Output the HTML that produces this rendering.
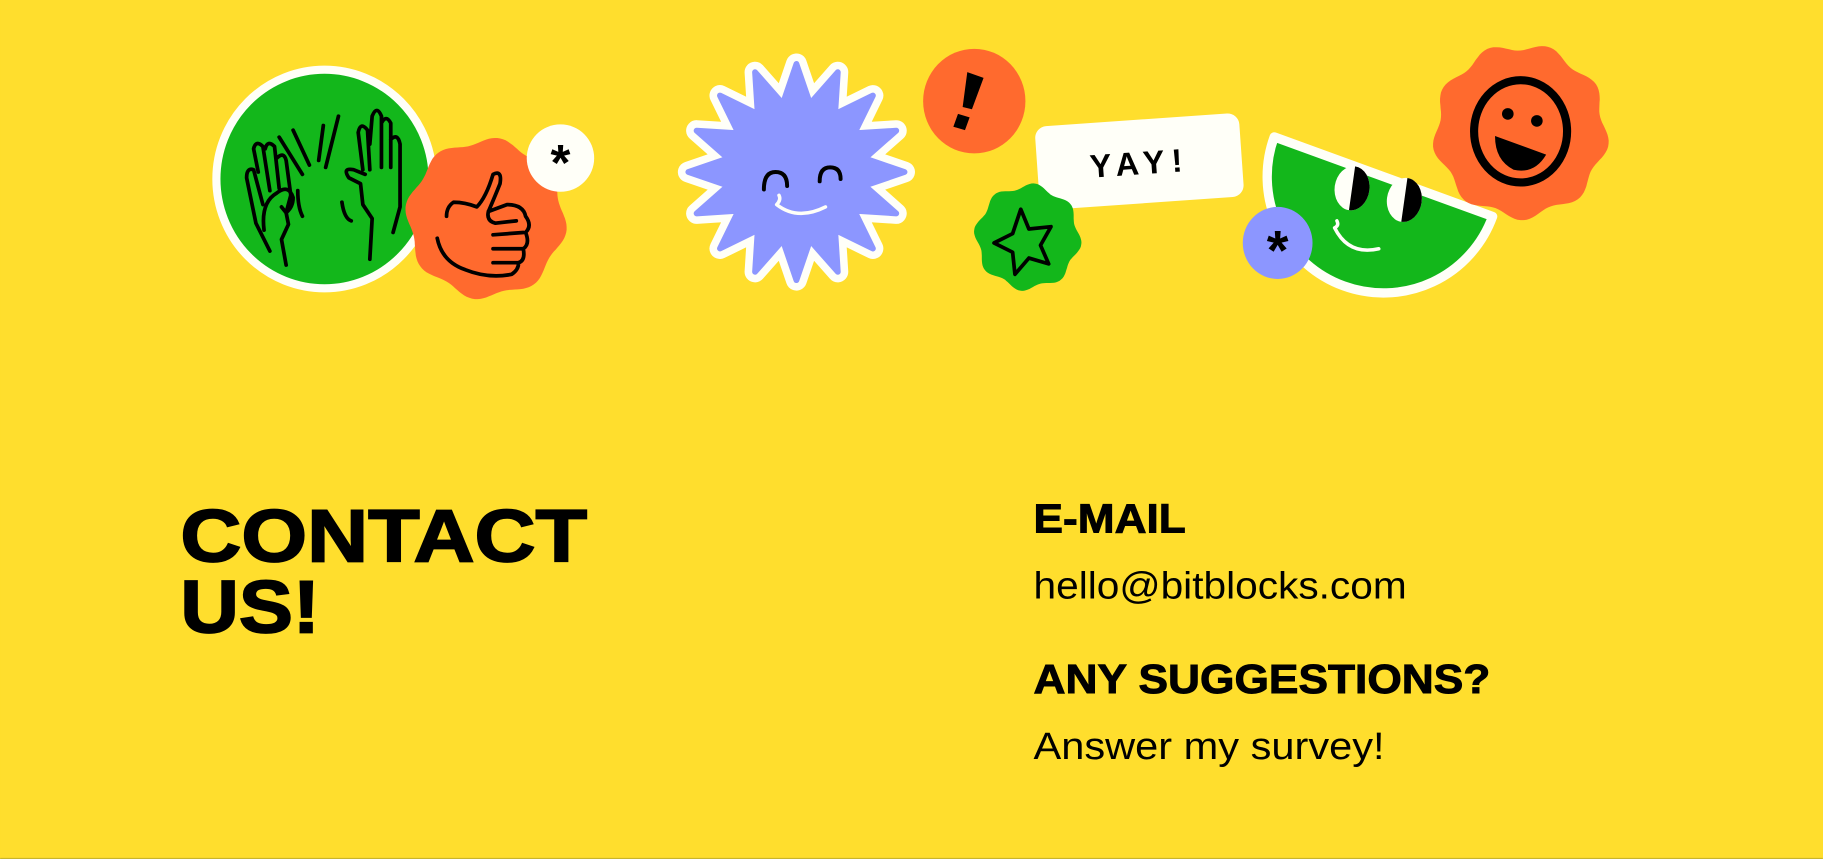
<!DOCTYPE html>
<html><head><meta charset="utf-8"><style>
html,body{margin:0;padding:0;background:#FFDE2D;width:1823px;height:859px;overflow:hidden}
svg{display:block}
.h{font-family:"Liberation Sans",sans-serif;font-weight:bold}
.t{font-family:"Liberation Sans",sans-serif;font-weight:normal}
</style></head><body>
<svg width="1823" height="859" viewBox="0 0 1568 739" xmlns="http://www.w3.org/2000/svg">
<rect width="1568" height="739" fill="#FFDE2D"/>
<line x1="0" y1="738.5" x2="1568" y2="738.5" stroke="#c9b52a" stroke-width="1"/>

<ellipse cx="279" cy="154" rx="93" ry="94" fill="#13B71B" stroke="#FFFFF8" stroke-width="7"/>
<g fill="none" stroke="#000" stroke-width="3.2" stroke-linecap="round" stroke-linejoin="round" transform="translate(-6,-22)">
<path d="M246 140 L266 172 M258 134 L272 164 M284 130 L280 160 M297 122 L286 166"/>
<path d="M238 238 L226 214 L218 175 Q218 166 224 168 L232 198 M228 170 L224 150 Q226 142 232 148 L238 186 M234 150 Q236 142 242 148 L246 184 M244 158 Q250 152 252 160 L256 190 L252 205 L248 200"/>
<path d="M233 220 Q230 196 244 188 Q254 180 258 192 Q258 200 252 205 L254 215 L248 228 L252 250 M262 186 Q262 200 266 208"/>
<path d="M324 245 L326 210 L318 198 L316 180 L306 175 Q300 166 310 168 L320 172 M318 168 L314 136 Q316 126 322 134 L324 168 M324 146 L326 122 Q330 112 334 122 L334 166 M334 128 Q338 120 342 128 L342 166 M342 142 Q348 136 350 146 L350 200 L344 222"/>
<path d="M300 196 Q302 210 308 212"/>
</g>

<path id="b1" fill="#FF6A2E"/>
<g fill="none" stroke="#000" stroke-width="3.2" stroke-linecap="round" stroke-linejoin="round">
<path d="M376 205 Q380 225 400 232 Q420 240 440 236 Q446 232 446 226 Q452 224 450 214 Q456 210 452 200 Q458 194 452 186 Q450 176 436 176 L420 182 Q426 168 430 158 Q432 146 424 150 Q418 170 410 178 Q400 174 390 174 Q384 178 384 186"/>
<path d="M420 182 Q418 190 426 192 L444 190 M424 202 L450 200 M424 214 L450 214 M424 226 L446 226"/>
</g>
<circle cx="482" cy="136" r="29" fill="#FFFFF8"/>
<text x="482" y="155" text-anchor="middle" class="h" font-size="44" fill="#000">*</text>

<path id="starw" fill="#FFFFF8" stroke="#FFFFF8" stroke-width="18" stroke-linejoin="round"/>
<path id="star" fill="#8C96FF" stroke="#8C96FF" stroke-width="5" stroke-linejoin="round"/>
<g fill="none" stroke="#000" stroke-width="3.4" stroke-linecap="round">
<path d="M657 163 Q657 148 667 148 Q677 148 677 160"/>
<path d="M705 156 Q705 144 714 144 Q723 144 723 154"/>
</g>
<path d="M668 176 Q672 172 670 168 M668 176 Q686 190 710 178" fill="none" stroke="#FFFFF8" stroke-width="3" stroke-linecap="round"/>

<ellipse cx="838" cy="87" rx="44" ry="45" fill="#FF6A2E"/>
<path d="M832 62 L846 67 L836 94 L828 92 Z M824 98 L834 101 L830 112 L820 109 Z" fill="#000"/>

<g transform="rotate(-4 980 138)">
<rect x="892" y="103" width="176" height="72" rx="10" fill="#FFFFF8"/>
<text x="980" y="150" text-anchor="middle" class="h" font-size="28" letter-spacing="6" fill="#000">YAY!</text>
</g>

<path id="b2" fill="#13B71B"/>
<path d="M880 184 L887 201 L906 199 L897 215 L904 231 L887 226 L875 240 L873 221 L857 213 L873 205 Z" transform="translate(-2,-4)" fill="none" stroke="#000" stroke-width="3.2" stroke-linejoin="round"/>

<g transform="translate(1190,152) rotate(20)">
<path d="M-100 0 A100 100 0 0 0 100 0 Z" fill="#13B71B" stroke="#FFFFF8" stroke-width="8" stroke-linejoin="round"/>
</g>
<g transform="rotate(8 1163 162)"><ellipse cx="1163" cy="162" rx="15" ry="19" fill="#FFFFF8"/><path d="M1163 143 A15 19 0 0 1 1163 181 Z" fill="#000"/></g>
<g transform="rotate(8 1208 172)"><ellipse cx="1208" cy="172" rx="15" ry="19" fill="#FFFFF8"/><path d="M1208 153 A15 19 0 0 1 1208 191 Z" fill="#000"/></g>
<path d="M1148 196 Q1152 194 1150 190 M1148 196 Q1160 220 1186 214" fill="none" stroke="#FFFFF8" stroke-width="3" stroke-linecap="round"/>

<ellipse cx="1099" cy="209" rx="30" ry="31" fill="#8C96FF"/>
<text x="1099" y="232" text-anchor="middle" class="h" font-size="48" fill="#000">*</text>

<path id="b3" fill="#FF6A2E"/>
<ellipse cx="1308" cy="113" rx="40" ry="44" fill="none" stroke="#000" stroke-width="7"/>
<circle cx="1297" cy="98" r="5" fill="#000"/>
<circle cx="1322" cy="104" r="5" fill="#000"/>
<path d="M1286 117 L1330 133 Q1320 150 1302 146 Q1286 138 1286 117 Z" fill="#000"/>

<text x="155" y="483" class="h" font-size="64" textLength="350" lengthAdjust="spacingAndGlyphs" fill="#000" stroke="#000" stroke-width="1.5">CONTACT</text>
<text x="155" y="544" class="h" font-size="64" textLength="120" lengthAdjust="spacingAndGlyphs" fill="#000" stroke="#000" stroke-width="1.5">US!</text>
<text x="889" y="458" class="h" font-size="35" textLength="131" lengthAdjust="spacingAndGlyphs" fill="#000" stroke="#000" stroke-width="0.8">E-MAIL</text>
<text x="889" y="515" class="t" font-size="33" textLength="321" lengthAdjust="spacingAndGlyphs" fill="#000">hello@bitblocks.com</text>
<text x="889" y="596" class="h" font-size="35" textLength="393" lengthAdjust="spacingAndGlyphs" fill="#000" stroke="#000" stroke-width="0.8">ANY SUGGESTIONS?</text>
<text x="889" y="653" class="t" font-size="33" textLength="302" lengthAdjust="spacingAndGlyphs" fill="#000">Answer my survey!</text>
</svg>
<script>
function blob(id,cx,cy,R,a,n,ph){var d="";for(var i=0;i<=180;i++){var t=i/180*2*Math.PI;var r=R+a*Math.sin(n*t+ph);d+=(i?"L":"M")+(cx+r*Math.cos(t)).toFixed(1)+" "+(cy+r*Math.sin(t)).toFixed(1);}document.getElementById(id).setAttribute("d",d+"Z");}
blob("b1",418,188,67,3,8,0.3);
blob("b2",884,204,44,2.5,8,0.5);
blob("b3",1308,113,73,3.5,9,0.2);
(function(){var cx=685,cy=148,n=16,d="";for(var i=0;i<2*n;i++){var t=i/(2*n)*2*Math.PI-Math.PI/2;var r=(i%2==0)?93:60;d+=(i?"L":"M")+(cx+r*Math.cos(t)).toFixed(1)+" "+(cy+r*Math.sin(t)).toFixed(1);}d+="Z";document.getElementById("star").setAttribute("d",d);document.getElementById("starw").setAttribute("d",d);})();
</script>
</body></html>
